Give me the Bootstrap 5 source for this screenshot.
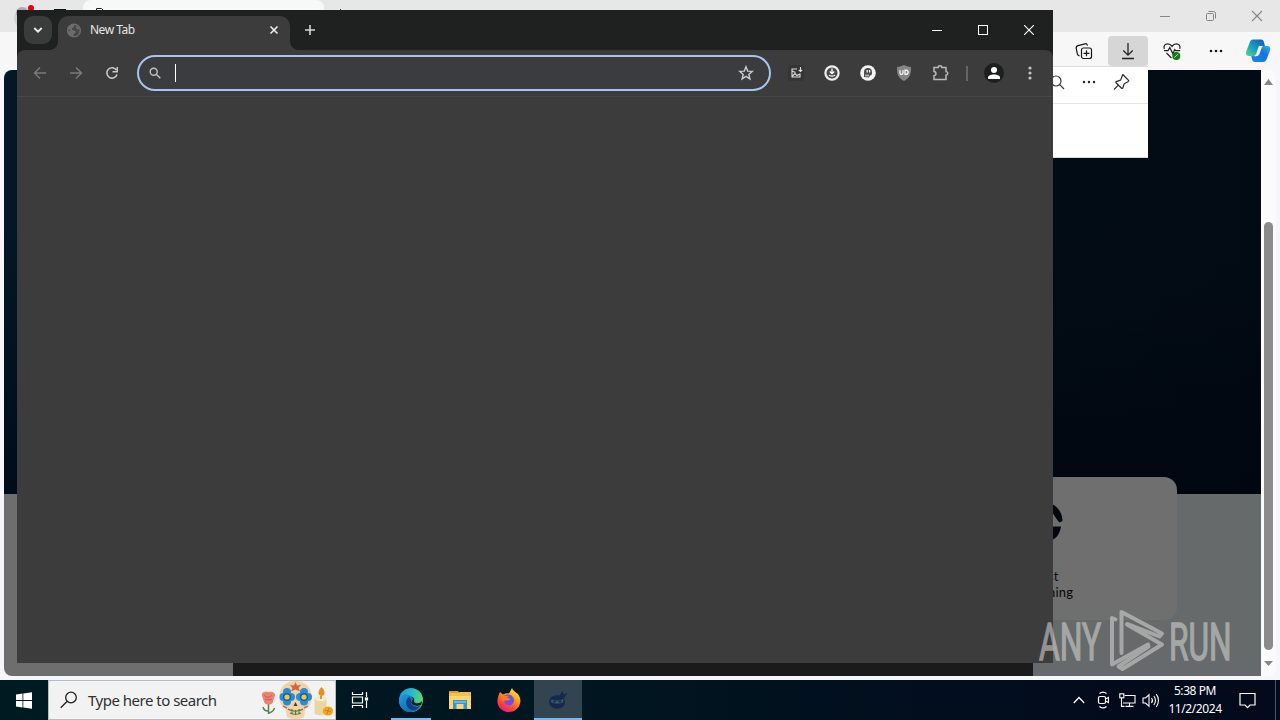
<!DOCTYPE html>
<html lang="en">
<head>
  <meta charset="UTF-8" />
  <title>New Tab</title>
  <link href="https://cdn.jsdelivr.net/npm/bootstrap@5.3.0/dist/css/bootstrap.min.css" rel="stylesheet" />
  <style>
    body {
      width: 1280px;
      height: 720px;
      overflow: hidden;
      background: #f3f5fa;
      font-family: "Noto Sans", "Open Sans", sans-serif;
    }

    svg { display: block; flex-shrink: 0; }

    .desktop { width: 1280px; height: 720px; }

    /* Edge window in the background */
    .edge-window { height: 680px; background: #f6f7fb; }
    .edge-titlebar { height: 32px; background: #e7e7e7; }
    .edge-profile { width: 83px; }
    .edge-tab { width: 241px; background: #f8f8f8; border-radius: 8px 8px 0 0; }
    .edge-toolbar { height: 38px; background: #f7f7f7; }
    .win-btn { width: 46px; }
    .tool-btn { width: 44px; }
    .tool-btn-on { width: 40px; height: 30px; margin: 0 2px; background: #d6d6d6; border-radius: 4px; }
    .copilot-btn { width: 42px; padding-right: 2px; }
    .edge-body { height: 606px; margin: 0 4px; border-radius: 8px; }
    .hero-dark { height: 424px; background: linear-gradient(180deg, rgba(0, 4, 14, 0) 35%, rgba(0, 4, 14, .6) 100%), linear-gradient(90deg, #021827 0%, #030d16 80%, #020b14 100%); }
    .strip-left { width: 229px; background: #6e6e6e; }
    .strip-mid { width: 800px; background: #1b1b1b; }
    .strip-right { background: #676a6a; }
    .edge-scroll { width: 15px; background: #fbfbfb; padding: 9px 0 10px; }
    .scroll-thumb { width: 9px; height: 428px; margin-top: 137px; background: #8b8b8b; border-radius: 5px; }

    /* result card that sticks out behind the Chrome window */
    .result-card {
      left: 1000px;
      top: 477px;
      width: 177px;
      height: 143px;
      background: #6f6f6f;
      border-radius: 0 13px 13px 0;
    }
    .result-text { left: 1048px; top: 568px; font: 13px/16px Lato, sans-serif; letter-spacing: .2px; color: #080808; }
    .result-mark { left: 1020px; top: 501px; }

    .downloads-flyout { left: 900px; top: 66px; width: 248px; height: 92px; background: #fff; border-top: 1px solid #dedede; border-bottom: 1px solid #dcdcdc; }
    .flyout-head { height: 37px; padding: 0 11px 6px 0; border-bottom: 1px solid #e4e4e4; }
    .flyout-btn { width: 32px; }

    /* Chrome window */
    .chrome-window { left: 17px; top: 10px; width: 1036px; height: 653px; background: #3c3c3c; }
    .tab-strip { height: 40px; background: #1f2020; padding: 6px 1px 0 7px; }
    .tab-search { width: 28px; height: 28px; border-radius: 9px; background: #3a3b3b; }
    .chrome-tab { width: 232px; height: 34px; margin-left: 6px; padding: 0 10px 6px 9px; background: #3c3c3c; border-radius: 10px 10px 0 0; }
    .chrome-tab::before, .chrome-tab::after {
      content: "";
      position: absolute;
      bottom: 0;
      width: 8px;
      height: 8px;
    }
    .chrome-tab::before { left: -8px; background: radial-gradient(circle at 0 0, transparent 7.5px, #3c3c3c 8px); }
    .chrome-tab::after { right: -8px; background: radial-gradient(circle at 100% 0, transparent 7.5px, #3c3c3c 8px); }
    .tab-title { font-size: 12px; line-height: 16px; color: #e6e6e6; margin-left: 8px; letter-spacing: -.5px; }
    .new-tab { width: 40px; height: 28px; }
    .chrome-controls { height: 28px; }
    .chrome-bar-wrap { background: #1f2020; }
    .chrome-bar { height: 47px; padding: 0 5px; background: #3c3c3c; border-radius: 8px 8px 0 0; border-bottom: 1px solid #484848; }
    .bar-btn { width: 36px; height: 36px; }
    .omnibox { width: 634px; height: 36px; margin: 0 7px; padding: 0 15px 0 10px; border: 2px solid #a9c3ee; border-radius: 18px; background: #3b3c3d; }
    .caret { width: 1px; height: 18px; margin-left: 14px; background: #fff; }
    .bar-sep { width: 18px; }
    .bar-sep i { width: 2px; height: 15px; background: #656565; }

    .watermark { left: 1030px; top: 600px; opacity: .57; }

    /* taskbar */
    .taskbar { height: 40px; background: linear-gradient(90deg, #001a22 0%, #001620 45%, #020d1d 75%, #020a1b 100%); }
    .start-btn { width: 48px; }
    .search-box { width: 288px; background: #f2f2f2; border: 1px solid #b9bcbd; padding-left: 11px; }
    .search-text { font-size: 15px; line-height: 20px; color: #303030; margin-left: 11px; letter-spacing: -.5px; white-space: nowrap; }
    .task-view { width: 48px; height: 40px; }
    .task-btn { width: 49px; height: 40px; }
    .task-open::after { content: ""; position: absolute; bottom: 0; width: 40px; height: 2px; background: #76b9ed; }
    .task-pin { margin-left: 2px; }
    .task-active { width: 48px; margin-left: 1px; background: #32444f; }
    .task-active::after { width: 48px; }
    .tray-btn { width: 24px; }
    .clock { width: 64px; font-size: 12px; line-height: 18px; color: #fff; letter-spacing: -.42px; }
    .notify-btn { width: 40px; }
    .show-desktop { width: 5px; margin-left: 8px; border-left: 1px solid #4b5560; }
  </style>
</head>
<body>
  <div class="desktop position-relative overflow-hidden">

    <div class="edge-window">
      <div class="edge-titlebar d-flex">
        <div class="edge-profile">
          <svg width="83" height="32"><circle cx="25" cy="18" r="11" fill="#d2d2d2"/><circle cx="22" cy="13" r="6" fill="#aaa"/><circle cx="31" cy="8" r="3" fill="#e3000f"/><path d="M54 10h12" stroke="#111" stroke-width="2"/></svg>
        </div>
        <div class="edge-tab"><svg width="40" height="16"><path d="M13.500 14V8.500h5L22 12" fill="none" stroke="#222"/></svg></div>
        <svg width="32" height="32"><path d="M16.500 9v8" stroke="#444"/></svg>
        <div class="d-flex ms-auto">
          <div class="win-btn d-flex align-items-center justify-content-center"><svg width="12" height="12"><path d="M1 6.500h10" stroke="#898989"/></svg></div>
          <div class="win-btn d-flex align-items-center justify-content-center"><svg width="12" height="12" fill="none" stroke="#858585"><rect x="1.500" y="3.500" width="7" height="7" rx="1"/><path d="M3.500 1.500h5a2 2 0 0 1 2 2v5"/></svg></div>
          <div class="win-btn d-flex align-items-center justify-content-center"><svg width="12" height="12"><path d="M1 1l10 10M11 1L1 11" stroke="#858585" stroke-width="1.100"/></svg></div>
        </div>
      </div>

      <div class="edge-toolbar d-flex justify-content-end align-items-center">
        <div class="tool-btn d-flex justify-content-center">
          <svg width="20" height="20" fill="none" stroke="#181818" stroke-width="1.200"><rect x="7.500" y="7" width="10" height="10.500" rx="2"/><path d="M12.500 9.300v6M9.500 12.300h6M5.500 14.800c-1.300-.1-1.800-.7-2.100-1.800L2.200 7.500C2 6 2.600 5 4 4.600l7-1.800c1.300-.3 2.100.4 2.500 1.800"/></svg>
        </div>
        <div class="tool-btn-on d-flex justify-content-center align-items-center">
          <svg width="14" height="18" fill="none" stroke="#222" stroke-width="1.300"><path d="M7 1v12M2.300 8.500L7 13.200l4.700-4.700M1 16.500h12"/></svg>
        </div>
        <div class="tool-btn d-flex justify-content-center">
          <svg width="20" height="20"><path d="M2.300 8C1.200 4.700 3.200 2.800 5.600 2.800c2 0 3.400 1 4.400 2.600 1-1.600 2.400-2.600 4.400-2.600 2.400 0 4.300 1.900 3.400 5M2 9.600h4l1.800-3 3 6 2-4 .9 1h4.500M4.500 12l5 5" fill="none" stroke="#222" stroke-width="1.200"/><circle cx="14.300" cy="15" r="4" fill="#0f7b0f"/><path d="M12.300 16.500l4-3.500" fill="none" stroke="#b5dfb5"/></svg>
        </div>
        <div class="tool-btn d-flex justify-content-center">
          <svg width="16" height="4" fill="#181818"><circle cx="3" cy="2" r="1.300"/><circle cx="8" cy="2" r="1.300"/><circle cx="13" cy="2" r="1.300"/></svg>
        </div>
        <div class="copilot-btn d-flex justify-content-center">
          <svg width="26" height="24" viewBox="0 0 26 24">
            <defs>
              <linearGradient id="cpA" x1="0" y1="1" x2="1" y2="0"><stop offset="0" stop-color="#5bd58a"/><stop offset=".45" stop-color="#169fc4"/><stop offset="1" stop-color="#1453b8"/></linearGradient>
              <linearGradient id="cpB" x1="0" y1="1" x2="1" y2="0"><stop offset="0" stop-color="#1b87ea"/><stop offset=".6" stop-color="#1574de"/><stop offset="1" stop-color="#31b7f1"/></linearGradient>
            </defs>
            <path d="M8 .5h8c2 0 2.800 1.500 3.300 4l.6 2.500h-2.500c-2 0-3 1-3.500 2.800l-1.400 4.700C11.500 16 10.500 17 8.500 17H3.500C1.200 17 .5 15 1.200 12.600L4.500 4C5.200 2 6.200.5 8 .5z" fill="url(#cpA)"/>
            <path d="M18 23h-8c-2 0-2.700-1.500-3.200-3.500L6.300 17h2.400c2 0 3-.8 3.500-2.500L14 9.300C14.600 7.500 15.500 7 17.500 7H22.500c2.500 0 3.200 2 2.500 4.400L21.700 20c-.7 2-1.900 3-3.700 3z" fill="url(#cpB)"/>
            <path d="M13.800 7h4.600c-1.500.5-1.800 1.500-2.200 3l-1.500 4.300c-.5 1.900-1.700 2.900-4 2.900H8.500c1.800-.5 2.400-1.500 2.900-2.900z" fill="#f5f8fb"/>
          </svg>
        </div>
      </div>

      <div class="edge-body d-flex overflow-hidden">
        <div class="flex-grow-1 d-flex flex-column">
          <div class="hero-dark"></div>
          <div class="d-flex flex-grow-1">
            <div class="strip-left"></div>
            <div class="strip-mid"></div>
            <div class="strip-right flex-grow-1"></div>
          </div>
        </div>
        <div class="edge-scroll d-flex flex-column align-items-center">
          <svg width="9" height="6"><path d="M0 6L4.500 0 9 6z" fill="#858585"/></svg>
          <div class="scroll-thumb"></div>
          <svg class="mt-auto" width="9" height="5"><path d="M0 0h9L4.500 5z" fill="#858585"/></svg>
        </div>
      </div>
    </div>

    <div class="result-card position-absolute"></div>
    <svg class="result-mark position-absolute" width="44" height="44" viewBox="0 0 44 44"><path d="M32 3c6 3 10.500 9 10.500 17l-3 1.500C37 19 34 14 32 11z" fill="#05090f"/><path d="M41 25.500c-1 6.500-4 11.500-9 13.500V25.500z" fill="#05090f"/></svg>
    <div class="result-text position-absolute">st<br>ning</div>

    <div class="downloads-flyout position-absolute">
      <div class="flyout-head d-flex justify-content-end align-items-center">
        <div class="flyout-btn d-flex justify-content-center"><svg width="16" height="16" fill="none" stroke="#3b3b3b" stroke-width="1.200"><circle cx="7" cy="7" r="5"/><path d="M10.700 10.700L15 15"/></svg></div>
        <div class="flyout-btn d-flex justify-content-center"><svg width="14" height="4" fill="#222"><circle cx="2" cy="2" r="1.200"/><circle cx="7" cy="2" r="1.200"/><circle cx="12" cy="2" r="1.200"/></svg></div>
        <div class="flyout-btn d-flex justify-content-center"><svg width="18" height="18" fill="none" stroke="#2d2d2d" stroke-width="1.200" stroke-linejoin="round"><path d="M10.800 1.500l6 6.200-.8 1-3.800 2-1.500 4.500-.9.300-6-6 .3-.9 4.500-1.500L10.200 3zM6.800 11.700L2 16.500"/></svg></div>
      </div>
    </div>

    <div class="chrome-window position-absolute">
      <div class="tab-strip d-flex">
        <div class="tab-search d-flex align-items-center justify-content-center"><svg width="10" height="8"><path d="M1.300 2L5 5.700 8.700 2" fill="none" stroke="#eee" stroke-width="1.800"/></svg></div>
        <div class="chrome-tab position-relative d-flex align-items-center">
          <svg width="15" height="15"><circle cx="7" cy="7.500" r="6.300" fill="#464646" stroke="#6c6c6c" stroke-width="1.500"/><path d="M1.500 4.500C3 2.500 4.500 1.500 7.200 1.400L7 4 5 5.300v1.500L8.500 8v2l-2 1v2.500C3 13 1 10.500 1 8l3 .3L1.500 6zM9.500 2l3 4-2 .5L9 5z" fill="#6c6c6c"/></svg>
          <span class="tab-title">New Tab</span>
          <svg class="ms-auto" width="12" height="12"><path d="M2.500 2.500l7 7M9.500 2.500l-7 7" stroke="#eee" stroke-width="1.600"/></svg>
        </div>
        <div class="new-tab d-flex align-items-center justify-content-center"><svg width="12" height="12"><path d="M6 1v10M1 6h10" stroke="#d5d5d5" stroke-width="1.600"/></svg></div>
        <div class="chrome-controls d-flex ms-auto">
          <div class="win-btn d-flex align-items-center justify-content-center"><svg width="10" height="10"><path d="M0 5.500h10" stroke="#fff"/></svg></div>
          <div class="win-btn d-flex align-items-center justify-content-center"><svg width="10" height="10"><rect x=".5" y=".5" width="9" height="9" fill="none" stroke="#fff"/></svg></div>
          <div class="win-btn d-flex align-items-center justify-content-center"><svg width="10" height="10"><path d="M0 0l10 10M10 0L0 10" stroke="#fff" stroke-width="1.100"/></svg></div>
        </div>
      </div>

      <div class="chrome-bar-wrap">
        <div class="chrome-bar d-flex align-items-center">
          <div class="bar-btn d-flex align-items-center justify-content-center"><svg width="14" height="14"><path d="M13 7H2M7 1.500L1.500 7 7 12.500" fill="none" stroke="#797979" stroke-width="1.500"/></svg></div>
          <div class="bar-btn d-flex align-items-center justify-content-center"><svg width="14" height="14"><path d="M1 7h11M7 1.500L12.500 7 7 12.500" fill="none" stroke="#797979" stroke-width="1.500"/></svg></div>
          <div class="bar-btn d-flex align-items-center justify-content-center"><svg width="14" height="14"><path d="M12 8.500A5.200 5.200 0 1 1 11.500 4.200" fill="none" stroke="#c9c9c9" stroke-width="1.600"/><path d="M13 1v5.500H7.500V5h4V1z" fill="#c9c9c9"/></svg></div>
          <div class="omnibox d-flex align-items-center">
            <svg width="12" height="12" fill="none" stroke="#c4c4c4" stroke-width="1.400"><circle cx="4.700" cy="4.700" r="3.500"/><path d="M7.300 7.300l4 4"/></svg>
            <div class="caret"></div>
            <svg class="ms-auto" width="16" height="16"><path d="M8 1.800l1.700 4.300 4.600.3-3.500 3 1.100 4.500L8 11.400l-3.900 2.500 1.100-4.500-3.500-3 4.600-.3z" fill="none" stroke="#ccc" stroke-width="1.400"/></svg>
          </div>
          <div class="bar-btn d-flex align-items-center justify-content-center"><svg width="16" height="16"><rect width="16" height="16" rx="3" fill="#353535"/><path d="M9 4H4v8h8V8.500M4.500 11l2.500-2.500 2 2L12 9M4 6l3.500 1.500M12.500 2v4.500M10.700 4.800l1.800 1.700 1.700-1.700" fill="none" stroke="#dedede" stroke-width="1.100"/></svg></div>
          <div class="bar-btn d-flex align-items-center justify-content-center"><svg width="16" height="16"><circle cx="8" cy="8" r="7.700" fill="#f0f0f0"/><circle cx="8" cy="8" r="5.500" fill="#4a4a4a"/><path d="M8 3.500v5M5.800 6.500L8 8.700l2.200-2.200M5 10c1 1.500 5 1.500 6 0" fill="none" stroke="#fff" stroke-width="1.300"/></svg></div>
          <div class="bar-btn d-flex align-items-center justify-content-center"><svg width="16" height="16"><circle cx="8" cy="8" r="7.800" fill="#f5f5f5"/><path d="M4 12V7a4 4 0 0 1 8 0v1.500a2 2 0 0 1-2 2L9 12.500z" fill="#4c4c4c"/><path d="M5 9.500h4v2H5z" fill="#a9a9a9"/><path d="M7.200 5v2.500M9.700 5v2.500" stroke="#fff" stroke-width="1.200"/></svg></div>
          <div class="bar-btn d-flex align-items-center justify-content-center"><svg width="16" height="16"><path d="M8 0c2 1.200 4.500 1.800 7 2 .2 7-1 11-7 14C2 13 .8 9 1 2c2.500-.2 5-.8 7-2z" fill="#858585"/><path d="M4 5.200v3c0 1.600 3 1.600 3 0v-3M9 5.200v4.100h1.200c2.500 0 2.500-4.100 0-4.100z" fill="none" stroke="#fff" stroke-width="1.200"/></svg></div>
          <div class="bar-btn d-flex align-items-center justify-content-center"><svg width="18" height="18"><path d="M3 3.500h4.200c0-2.200 3.600-2.200 3.600 0H15v4c2.400.1 2.400 3.500 0 3.600v4.400H3v-3.800c2.600-.3 2.600-4 0-4.300z" fill="none" stroke="#b9b9b9" stroke-width="1.500"/></svg></div>
          <div class="bar-sep d-flex justify-content-center"><i></i></div>
          <div class="bar-btn d-flex align-items-center justify-content-center"><svg width="20" height="20"><circle cx="10" cy="10" r="10" fill="#1d1e1e"/><circle cx="10" cy="7" r="3" fill="#fff"/><path d="M4 16v-1.500c0-4 12-4 12 0V16z" fill="#fff"/></svg></div>
          <div class="bar-btn d-flex align-items-center justify-content-center"><svg width="4" height="14" fill="#c4c4c4"><circle cx="2" cy="2" r="1.600"/><circle cx="2" cy="7" r="1.600"/><circle cx="2" cy="12" r="1.600"/></svg></div>
        </div>
      </div>
    </div>

    <svg class="watermark position-absolute" width="210" height="78" viewBox="1030 600 210 78">
      <g fill="#d5d5d5" stroke="#d5d5d5" stroke-width="1.400" font-family="Roboto, sans-serif" font-size="51">
        <text transform="translate(1039 659.500) scale(.625 1)">ANY</text>
        <text transform="translate(1169 659.500) scale(.62 1)">RUN</text>
      </g>
      <g fill="none" stroke="#d5d5d5" stroke-width="4" stroke-linejoin="round" stroke-linecap="round">
        <path d="M1115.500 619.500l-3.500-1.500v46.500l36-20"/>
        <path d="M1121.500 653V612l40.500 21.500-2.500 3-32-12.500"/>
        <path d="M1127 624.500l35 20-39.500 24.500-4-2.500 30-20"/>
      </g>
    </svg>

    <div class="taskbar d-flex align-items-stretch">
      <div class="start-btn d-flex align-items-center justify-content-center">
        <svg width="16" height="17" fill="#fff"><path d="M0 2.500L6.500 1.600V8H0zM7.300 1.500L16 .3V8H7.300zM0 9h6.500v6.400L0 14.500zM7.300 9H16v7.700l-8.700-1.200z"/></svg>
      </div>
      <div class="search-box d-flex align-items-center">
        <svg width="17" height="18" fill="none" stroke="#222" stroke-width="1.300"><circle cx="11" cy="6.500" r="5.300"/><path d="M7.200 10.300L.7 16.800"/></svg>
        <span class="search-text">Type here to search</span>
        <svg class="ms-auto" width="75" height="38" viewBox="260 681 75 38">
          <g fill="none" stroke="#5d8052" stroke-width="1.500"><path d="M268.500 702v12M268 711c-3 0-4.500-2-5-4M269 713c3-1 5-3 5.500-5"/></g>
          <path d="M262 696c-1-4 3-5 6.500-4 4-1 8 1 6 5l-2 6c-2 2-6 2-8 0z" fill="#e98372"/>
          <path d="M264 695c2 3 6 3 8 0M265 699c2 1 5 1 7 0" stroke="#c85e54" fill="none"/>
          <path d="M295.500 681c11 0 17 8 16 18 0 5-3 8-6 9l-1.500 9c-3 2.500-14 2.500-17 0l-1.500-9c-3-1-6-4-6-9-1-10 5-18 16-18z" fill="#efd3aa"/>
          <g fill="#258ed5"><circle cx="287" cy="692" r="4"/><circle cx="283.500" cy="697" r="4"/><circle cx="287" cy="701.500" r="4"/><circle cx="291" cy="697" r="4"/><circle cx="304" cy="692" r="4"/><circle cx="300" cy="697" r="4"/><circle cx="304" cy="701.500" r="4"/><circle cx="308" cy="697" r="4"/></g>
          <g fill="#155ba7"><circle cx="287" cy="697" r="4"/><circle cx="304" cy="697" r="4"/></g>
          <g fill="#f3c83f"><circle cx="287" cy="697" r="2.600"/><circle cx="304" cy="697" r="2.600"/></g>
          <path d="M295.500 682l1.500 3.500 4-.5-2.500 3 1.500 3.500-4.500-2-4.500 2 1.500-3.500-2.500-3 4 .5z" fill="#d8643e"/>
          <path d="M295.500 702l2 4h-4z" fill="#4a3d2b"/>
          <path d="M288 709c4 3 11 3 15 0M290 713c3 1.500 8 1.500 11 0M292 709v5M295.500 710v5M299 709v5" fill="none" stroke="#63743f" stroke-width="1.200"/>
          <path d="M283 706l4 2M308 706l-4 2" stroke="#d86e44" stroke-width="1.500"/>
          <path d="M314.500 699c0-3 12-3 12 0v14c0 3-12 3-12 0z" fill="#e8d6a5"/><ellipse cx="320.500" cy="699" rx="5.500" ry="2" fill="#f7edc8"/>
          <path d="M321.500 687c5 5 3 9 0 9s-5-4 0-9z" fill="#ee8b19"/><path d="M321 696v3" stroke="#6d4c2c"/>
          <ellipse cx="328" cy="711" rx="5.200" ry="4.500" fill="#f4a51f"/><path d="M325 710l6 2M329 708l-2 6" stroke="#d97c13"/>
        </svg>
      </div>
      <div class="task-view d-flex align-items-center justify-content-center">
        <svg width="18" height="18" fill="none" stroke="#fff" stroke-width="1.200"><path d="M1.500 1v2.500h10V1M1.500 17v-2.500h10V17M1.500 6h10v6h-10zM15.500 1v5M15.500 10v7"/><rect x="14.500" y="7" width="2" height="2" fill="#fff"/></svg>
      </div>
      <div class="task-btn task-open task-pin position-relative d-flex align-items-center justify-content-center">
        <svg width="24" height="24" viewBox="0 0 24 24">
          <defs>
            <linearGradient id="edA" x1="0" y1=".3" x2="1" y2=".5"><stop offset="0" stop-color="#1e9bde"/><stop offset=".5" stop-color="#27b9c9"/><stop offset="1" stop-color="#65d965"/></linearGradient>
            <linearGradient id="edB" x1="0" y1="0" x2="1" y2="1"><stop offset="0" stop-color="#1b9be0"/><stop offset="1" stop-color="#135aac"/></linearGradient>
          </defs>
          <circle cx="12" cy="12" r="12" fill="url(#edA)"/>
          <path d="M0 12C1 7 7 5 11 7.500c2.500 1.600 3 4 1.500 5.500-1 3.500 4 6.500 9.500 4.500-2.500 4.500-6.500 6.500-10.500 6.500C4.500 24-.5 18 0 12z" fill="url(#edB)"/>
          <path d="M11 8.500c-5 2-5 9-1 12 3 2.500 7 2 11-2-5 1.500-9-1-8.500-4z" fill="#123e85"/>
          <path d="M12.500 13.500c2-2 1-4.500-1-5 3 0 4.500 3 3.500 5.500 2 2 6 1.500 8-1l-.5 3.500c-4 3-10.500 1-10-3z" fill="#001821"/>
        </svg>
      </div>
      <div class="task-btn d-flex align-items-center justify-content-center">
        <svg width="22" height="20"><path d="M0 1h9l2 2.500H0z" fill="#e59e25"/><path d="M0 3h22v16H0z" fill="#fcd66f"/><path d="M0 3h9l2-1h11v4H0z" fill="#f4bf4c"/><path d="M4 10h14v9h-3.500v-5h-7v5H4z" fill="#3992d1"/><path d="M5 11h12v2H5z" fill="#67b7e4"/></svg>
      </div>
      <div class="task-btn d-flex align-items-center justify-content-center">
        <svg width="24" height="24" viewBox="0 0 24 24">
          <defs><linearGradient id="ffA" x1=".8" y1="0" x2=".2" y2="1"><stop offset="0" stop-color="#fff13d"/><stop offset=".4" stop-color="#ff980e"/><stop offset=".7" stop-color="#ff453d"/><stop offset="1" stop-color="#e31578"/></linearGradient></defs>
          <path d="M3 4l3 2.500c2-1 4-1.500 6-1L15 0c1 2.500 3 3.500 4.500 5L21 6c2 3 3 6 2 9.500C21.500 21 17 24 12 24 5 24-.5 18.500.5 11.500 1 8.500 2 6 3 4z" fill="url(#ffA)"/>
          <path d="M7 8c2-2 6-2 8 0s3 5 1 7.500-6 2.500-8 0c-2-2 0-3 2-3 2 0 3-1 3-2-3 0-4-1-6-2.500z" fill="#7250df"/>
          <path d="M4 6l4 2 4-.5c-1 2-3 2-3 3.500-2 0-3 1-2.500 3C4 12 3.500 9 4 6z" fill="#ff7a20"/>
        </svg>
      </div>
      <div class="task-btn task-open task-active position-relative d-flex align-items-center justify-content-center">
        <svg width="20" height="20" fill="#15294b"><ellipse cx="9" cy="12" rx="8" ry="6.800"/><path d="M11 6l3.500-5 1.200 3.500L19.500 3 17 7l-3 2z"/><path d="M3.500 9.500c4 1.500 8 1.500 11.500-.5l.5 3c-4 2-9 2-12.500 0z" fill="#41586b"/><ellipse cx="6.500" cy="11.600" rx="1.600" ry="1"/><ellipse cx="12" cy="11.400" rx="1.600" ry="1"/></svg>
      </div>

      <div class="d-flex align-items-center ms-auto">
        <div class="tray-btn d-flex justify-content-center"><svg width="12" height="8"><path d="M.8 7L6 1.500 11.200 7" fill="none" stroke="#fff" stroke-width="1.300"/></svg></div>
        <div class="tray-btn d-flex justify-content-center"><svg width="12" height="18" fill="none" stroke="#fff" stroke-width="1.200"><rect x="1.500" y="5.500" width="7" height="7" rx="1.500"/><path d="M8.500 8l3-1.500v5l-3-1.500M2.500 2.500C4.500.8 7.500.8 9.500 2.500M2.500 15.500c2 1.700 5 1.700 7 0"/></svg></div>
        <div class="tray-btn d-flex justify-content-center"><svg width="17" height="14" fill="none" stroke="#fff" stroke-width="1.100"><path d="M5.500 2.500h10.500v7.500H4M10.500 10v3M6.500 13.400h8M2.500 5v8.400h3"/><rect x=".8" y=".8" width="4" height="4"/></svg></div>
        <div class="tray-btn d-flex justify-content-center"><svg width="18" height="15" fill="none" stroke="#fff" stroke-width="1.100"><path d="M1 5h2.500L7 1.800v11.400L3.500 10H1zM9.500 5c1.200 1.500 1.200 3.500 0 5M11.800 3c2.200 2.500 2.200 6.500 0 9M14.200 1.200c3 3.500 3 9 0 12.600"/></svg></div>
        <div class="clock text-center">5:38 PM<br>11/2/2024</div>
        <div class="notify-btn d-flex justify-content-center"><svg width="17" height="17"><path d="M1 1.500h15v11.500h-5L8.500 15.700 6 13H1z" fill="none" stroke="#fff" stroke-width="1.200"/></svg></div>
        <div class="show-desktop h-100"></div>
      </div>
    </div>
  </div>

  <script src="https://cdn.jsdelivr.net/npm/bootstrap@5.3.0/dist/js/bootstrap.bundle.min.js"></script>
</body>
</html>
